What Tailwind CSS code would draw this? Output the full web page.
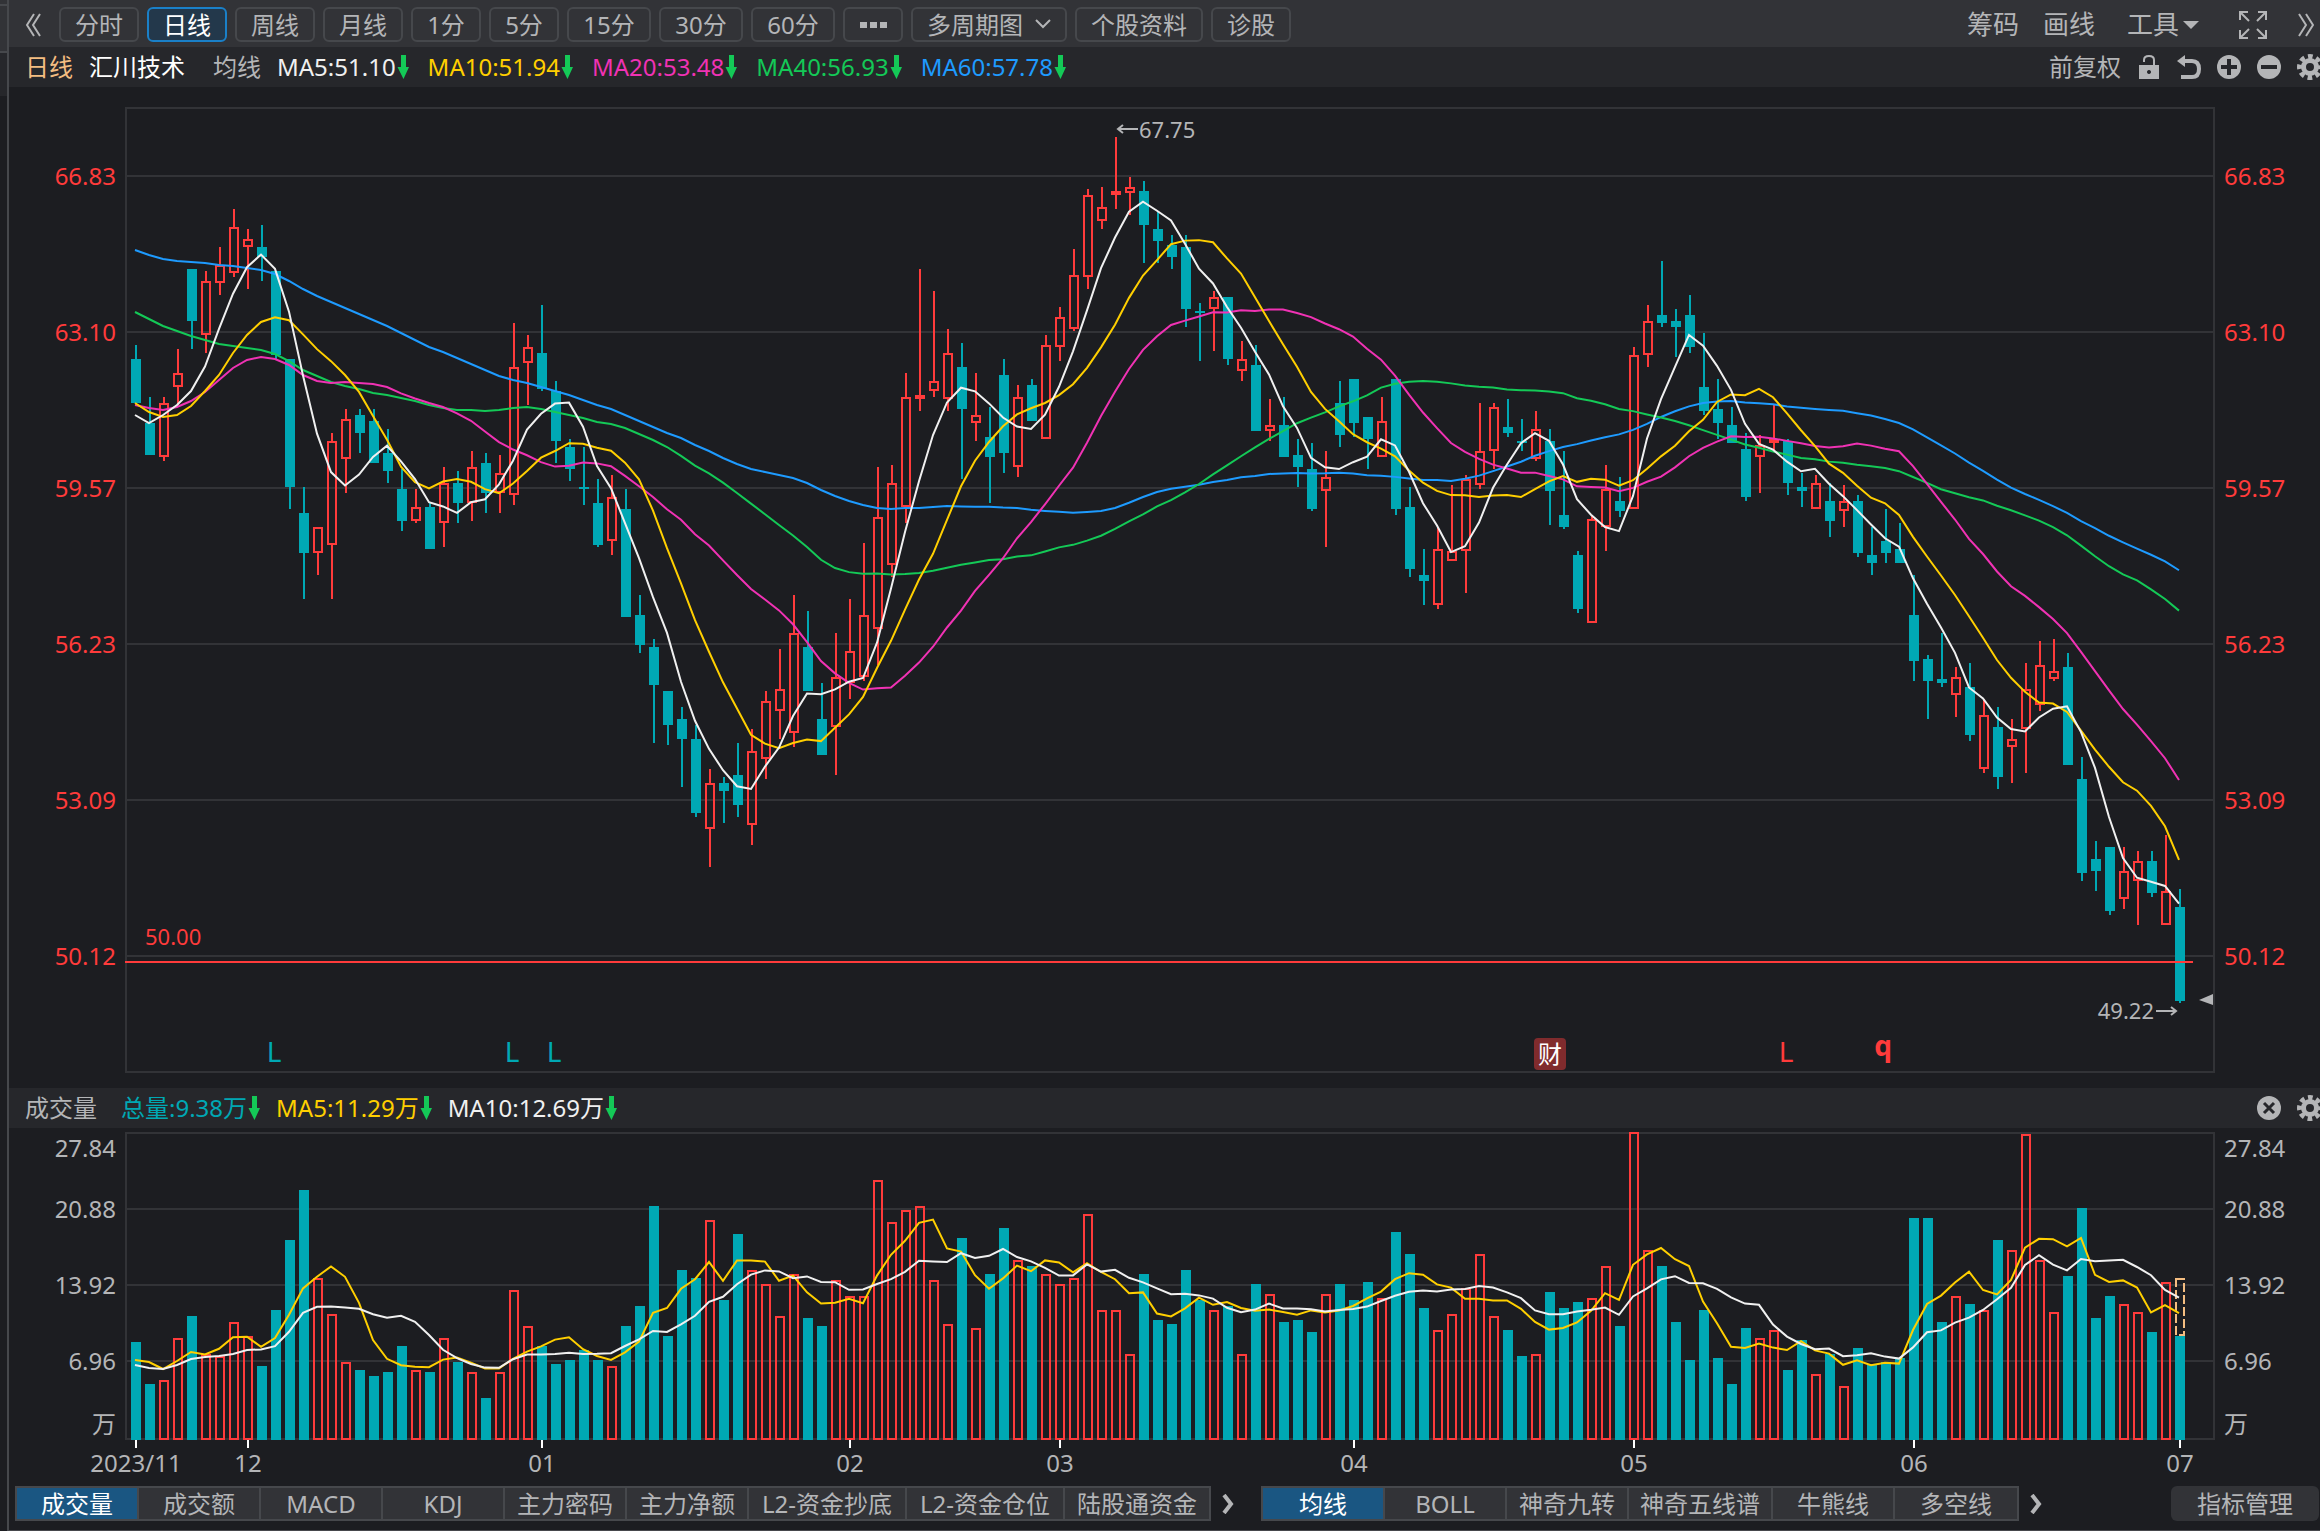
<!DOCTYPE html>
<html lang="zh-CN">

<head>
    <meta charset="UTF-8">
    <meta name="viewport" content="width=device-width,initial-scale=1.0">
    <script src="https://cdn.jsdelivr.net/npm/@tailwindcss/browser@4"></script>
    <title>汇川技术 - 日线</title>
</head>

<body class="bg-[#1c1d21] min-h-screen flex overflow-x-hidden text-2xl text-[#b4b5b7] font-['Noto_Sans','Noto_Sans_CJK_SC',sans-serif]">
    <!-- Shared icons -->
    <svg class="hidden">
        <symbol id="down" viewBox="0 0 12 24">
            <path d="M4 0h5v12h3L6.500 24 0.500 12H4z" fill="#14c957" />
        </symbol>
        <symbol id="gear" viewBox="0 0 26 26">
            <g fill="none" stroke="currentColor">
                <circle cx="13" cy="13" r="6.500" stroke-width="5" />
                <circle cx="13" cy="13" r="10.500" stroke-width="5" stroke-dasharray="4.600 3.647" stroke-dashoffset="2.300" />
            </g>
        </symbol>
    </svg>

    <!-- Edge of the side panel -->
    <div class="w-[9px] shrink-0 border-r-2 border-[#46484c]">
        <div class="h-1 bg-[#323337]"></div>
        <div class="h-[49px] bg-[#323337] border-y-2 border-[#46484c]"></div>
        <div class="h-[43px] bg-[#26272b]"></div>
    </div>

    <main class="flex-1 min-w-0 flex flex-col border-b border-[#46484c]">
        <!-- Period toolbar -->
        <header class="h-[47px] bg-[#323337] flex items-center pt-[2px] pl-4 pr-[6px] whitespace-nowrap">
            <button aria-label="收起" class="mr-[18px]">
                <svg class="w-4 h-6" viewBox="0 0 16 24" fill="none" stroke="currentColor" stroke-width="2"><path d="M9 1 2 12l7 11M15 1 8 12l7 11" /></svg>
            </button>
            <nav class="flex gap-2 leading-8">
                <button class="w-[80px] h-[35px] border-2 border-[#46484c] rounded-md">分时</button>
                <button class="w-[80px] h-[35px] border-2 border-[#1a80c8] rounded-md bg-[#23384b] text-white">日线</button>
                <button class="w-[80px] h-[35px] border-2 border-[#46484c] rounded-md">周线</button>
                <button class="w-[80px] h-[35px] border-2 border-[#46484c] rounded-md">月线</button>
                <button class="w-[70px] h-[35px] border-2 border-[#46484c] rounded-md">1分</button>
                <button class="w-[70px] h-[35px] border-2 border-[#46484c] rounded-md">5分</button>
                <button class="w-[84px] h-[35px] border-2 border-[#46484c] rounded-md">15分</button>
                <button class="w-[84px] h-[35px] border-2 border-[#46484c] rounded-md">30分</button>
                <button class="w-[84px] h-[35px] border-2 border-[#46484c] rounded-md">60分</button>
                <button aria-label="更多周期" class="w-[60px] h-[35px] border-2 border-[#46484c] rounded-md flex items-center justify-center gap-[3px]">
                    <span class="w-[7px] h-[6px] bg-[#b4b5b7]"></span>
                    <span class="w-[7px] h-[6px] bg-[#b4b5b7]"></span>
                    <span class="w-[7px] h-[6px] bg-[#b4b5b7]"></span>
                </button>
                <div class="relative">
                    <select aria-label="多周期图" class="appearance-none w-[156px] h-[35px] pl-[14px] border-2 border-[#46484c] rounded-md leading-[30px]">
                        <option>多周期图</option>
                    </select>
                    <svg class="absolute right-4 top-3 w-4 h-[10px] pointer-events-none" viewBox="0 0 16 10" fill="none" stroke="currentColor" stroke-width="2"><path d="m1 1 7 7 7-7" /></svg>
                </div>
                <button class="w-[128px] h-[35px] border-2 border-[#46484c] rounded-md">个股资料</button>
                <button class="w-[80px] h-[35px] border-2 border-[#46484c] rounded-md">诊股</button>
            </nav>
            <div class="ml-auto flex items-center text-[26px]">
                <button class="mr-6">筹码</button>
                <button class="mr-8">画线</button>
                <button class="flex items-center gap-1 mr-10">工具
                    <svg class="w-4 h-2" viewBox="0 0 16 8" fill="currentColor"><path d="M0 0h16L8 8z" /></svg>
                </button>
                <button aria-label="全屏" class="mr-[31px]">
                    <svg class="w-7 h-7" viewBox="0 0 28 28" fill="none" stroke="currentColor" stroke-width="2"><path d="M1 9V1h8M2 2l8 8M19 1h8v8M26 2l-8 8M1 19v8h8M2 26l8-8M27 19v8h-8M26 26l-8-8" /></svg>
                </button>
                <button aria-label="展开">
                    <svg class="w-4 h-6" viewBox="0 0 16 24" fill="none" stroke="currentColor" stroke-width="2"><path d="m1 1 7 11-7 11M8 1l7 11-7 11" /></svg>
                </button>
            </div>
        </header>

        <!-- Moving averages of the price -->
        <div class="h-10 bg-[#26272b] flex items-center pl-4 whitespace-nowrap overflow-hidden">
            <span class="text-[#f4bd81] mr-4">日线</span>
            <h1 class="text-white mr-7">汇川技术</h1>
            <span class="mr-4">均线</span>
            <div class="flex gap-[19px]">
                <span class="flex items-center text-[#f0f0f0]">MA5:51.10<svg class="w-3 h-6 ml-px"><use href="#down" /></svg></span>
                <span class="flex items-center text-[#ffcf00]">MA10:51.94<svg class="w-3 h-6 ml-px"><use href="#down" /></svg></span>
                <span class="flex items-center text-[#f032b4]">MA20:53.48<svg class="w-3 h-6 ml-px"><use href="#down" /></svg></span>
                <span class="flex items-center text-[#14c957]">MA40:56.93<svg class="w-3 h-6 ml-px"><use href="#down" /></svg></span>
                <span class="flex items-center text-[#1e9bff]">MA60:57.78<svg class="w-3 h-6 ml-px"><use href="#down" /></svg></span>
            </div>
            <div class="ml-auto flex items-center gap-4">
                <button class="mr-[2px]">前复权</button>
                <button aria-label="锁定" class="mr-[2px]">
                    <svg class="w-5 h-6" viewBox="0 0 20 24"><path d="M5 7V5q0-4 5-4t5 4v6" fill="none" stroke="currentColor" stroke-width="2" /><path d="M0 10h20v14H0zm10 5a2 2 0 1 0 .01 0z" fill="currentColor" fill-rule="evenodd" /></svg>
                </button>
                <button aria-label="撤销">
                    <svg class="w-6 h-6" viewBox="0 0 24 24"><path d="M4 6h11q7 0 7 8t-7 8H4" fill="none" stroke="currentColor" stroke-width="4" /><path d="M0 6l8-6v12z" fill="currentColor" /></svg>
                </button>
                <button aria-label="放大">
                    <svg class="w-6 h-6" viewBox="0 0 24 24"><circle cx="12" cy="12" r="12" fill="currentColor" /><path d="M4 12h16M12 4v16" stroke="#26272b" stroke-width="4" /></svg>
                </button>
                <button aria-label="缩小">
                    <svg class="w-6 h-6" viewBox="0 0 24 24"><circle cx="12" cy="12" r="12" fill="currentColor" /><path d="M4 12h16" stroke="#26272b" stroke-width="4" /></svg>
                </button>
                <button aria-label="均线设置" class="-mr-[3px]">
                    <svg class="w-[26px] h-[26px]"><use href="#gear" /></svg>
                </button>
            </div>
        </div>

        <!-- Price chart -->
        <section class="flex pt-5 pb-[15px]">
            <ul class="w-[116px] shrink-0 pr-[9px] -mt-[9px] text-right text-[#ff3b3b]">
                <li class="h-[156px] flex items-center justify-end">66.83</li>
                <li class="h-[156px] flex items-center justify-end">63.10</li>
                <li class="h-[156px] flex items-center justify-end">59.57</li>
                <li class="h-[156px] flex items-center justify-end">56.23</li>
                <li class="h-[156px] flex items-center justify-end">53.09</li>
                <li class="h-[156px] flex items-center justify-end">50.12</li>
            </ul>
            <svg id="price" class="flex-1 min-w-0 h-[966px]"></svg>
            <ul class="w-[105px] shrink-0 pl-[9px] -mt-[9px] text-[#ff3b3b]">
                <li class="h-[156px] flex items-center">66.83</li>
                <li class="h-[156px] flex items-center">63.10</li>
                <li class="h-[156px] flex items-center">59.57</li>
                <li class="h-[156px] flex items-center">56.23</li>
                <li class="h-[156px] flex items-center">53.09</li>
                <li class="h-[156px] flex items-center">50.12</li>
            </ul>
        </section>

        <!-- Volume header -->
        <div class="h-10 bg-[#26272b] flex items-center pl-4 whitespace-nowrap overflow-hidden">
            <h2 class="mr-6">成交量</h2>
            <div class="flex gap-4">
                <span class="flex items-center text-[#00a8b4]">总量:9.38万<svg class="w-3 h-6 ml-px"><use href="#down" /></svg></span>
                <span class="flex items-center text-[#ffcf00]">MA5:11.29万<svg class="w-3 h-6 ml-px"><use href="#down" /></svg></span>
                <span class="flex items-center text-[#f0f0f0]">MA10:12.69万<svg class="w-3 h-6 ml-px"><use href="#down" /></svg></span>
            </div>
            <div class="ml-auto flex items-center gap-4">
                <button aria-label="关闭">
                    <svg class="w-6 h-6" viewBox="0 0 24 24"><circle cx="12" cy="12" r="12" fill="currentColor" /><path d="m7 7 10 10M17 7 7 17" stroke="#26272b" stroke-width="3" /></svg>
                </button>
                <button aria-label="成交量设置" class="-mr-[3px]">
                    <svg class="w-[26px] h-[26px]"><use href="#gear" /></svg>
                </button>
            </div>
        </div>

        <!-- Volume chart -->
        <section class="flex pt-1">
            <ul class="w-[116px] shrink-0 pr-[9px] text-right">
                <li class="h-[39px] leading-8">27.84</li>
                <li class="h-[76px] flex items-center justify-end">20.88</li>
                <li class="h-[76px] flex items-center justify-end">13.92</li>
                <li class="h-[76px] flex items-center justify-end">6.96</li>
                <li class="h-[50px] flex items-center justify-end">万</li>
            </ul>
            <svg id="volume" class="flex-1 min-w-0 h-[348px] overflow-visible"></svg>
            <ul class="w-[105px] shrink-0 pl-[9px]">
                <li class="h-[39px] leading-8">27.84</li>
                <li class="h-[76px] flex items-center">20.88</li>
                <li class="h-[76px] flex items-center">13.92</li>
                <li class="h-[76px] flex items-center">6.96</li>
                <li class="h-[50px] flex items-center">万</li>
            </ul>
        </section>

        <!-- Indicator tabs -->
        <footer class="flex items-center mt-[6px] pl-[6px] whitespace-nowrap">
            <div class="flex h-[35px] border-2 border-[#46484c] divide-x-2 divide-[#46484c] bg-[#323337] leading-[30px]">
                <button class="w-[122px] bg-[#1a5682] text-white">成交量</button>
                <button class="w-[122px]">成交额</button>
                <button class="w-[122px]">MACD</button>
                <button class="w-[122px]">KDJ</button>
                <button class="w-[122px]">主力密码</button>
                <button class="w-[122px]">主力净额</button>
                <button class="w-[158px]">L2-资金抄底</button>
                <button class="w-[158px]">L2-资金仓位</button>
                <button class="w-[144px]">陆股通资金</button>
            </div>
            <button aria-label="更多副图指标" class="ml-[10px] mr-[26px]">
                <svg class="w-[14px] h-5" viewBox="0 0 14 20" fill="none" stroke="currentColor" stroke-width="4"><path d="m3 1 7 9-7 9" /></svg>
            </button>
            <div class="flex h-[35px] border-2 border-[#46484c] divide-x-2 divide-[#46484c] bg-[#323337] leading-[30px]">
                <button class="w-[122px] bg-[#1a5682] text-white">均线</button>
                <button class="w-[122px]">BOLL</button>
                <button class="w-[122px]">神奇九转</button>
                <button class="w-[144px]">神奇五线谱</button>
                <button class="w-[122px]">牛熊线</button>
                <button class="w-[122px]">多空线</button>
            </div>
            <button aria-label="更多主图指标" class="ml-[10px]">
                <svg class="w-[14px] h-5" viewBox="0 0 14 20" fill="none" stroke="currentColor" stroke-width="4"><path d="m3 1 7 9-7 9" /></svg>
            </button>
            <button class="ml-auto mr-px w-[148px] h-[35px] rounded-md bg-[#323337]">指标管理</button>
        </footer>
    </main>

    <script>
        const RED = '#ff3b3b';
        const TEAL = '#00a8b4';
        const GREY = '#b4b5b7';
        const GRID = '#323337';

        // One candle per day: up (1) or down (0), high, body top, body bottom, low
        const candles = [
            [0,345,359,403,403],[0,397,423,455,455],[1,397,403,457,461],[1,349,373,387,405],[0,269,269,321,349],
            [1,271,281,335,353],[1,247,265,283,295],[1,209,227,273,277],[1,229,239,247,289],[0,225,247,257,281],
            [0,271,271,355,360],[0,359,359,487,509],[0,487,513,553,599],[1,527,527,553,575],[1,433,441,545,599],
            [1,409,419,459,493],[0,409,415,433,453],[0,409,421,463,463],[0,429,453,471,483],[0,469,489,521,531],
            [1,489,507,521,523],[0,502,507,549,549],[1,467,483,523,547],[0,471,483,503,523],[1,451,467,503,521],
            [0,453,463,493,513],[1,455,473,493,513],[1,323,367,495,505],[1,335,347,363,405],[0,305,353,389,391],
            [0,381,391,441,463],[0,439,447,469,481],[0,447,487,489,505],[0,479,503,545,547],[1,475,497,541,555],
            [0,489,509,617,617],[0,595,615,645,653],[0,639,647,685,743],[0,691,691,725,745],[0,707,719,739,787],
            [0,725,739,813,817],[1,769,783,829,867],[0,777,783,791,823],[0,743,775,805,817],[1,729,751,825,845],
            [1,691,701,759,779],[1,649,689,711,739],[1,595,633,733,747],[0,611,647,691,691],[0,683,719,755,755],
            [1,633,677,727,775],[1,599,651,683,699],[1,543,615,677,681],[1,467,517,629,665],[1,465,483,565,577],
            [1,373,397,507,523],[1,269,395,399,411],[1,291,381,391,397],[1,329,353,399,411],[0,343,367,409,479],
            [1,373,415,423,441],[0,407,437,457,503],[0,359,375,453,473],[1,385,397,467,477],[0,379,385,421,421],
            [1,335,345,439,439],[1,307,317,347,361],[1,249,275,329,331],[1,189,195,277,289],[1,187,207,221,229],
            [1,137,191,195,209],[1,177,187,193,215],[0,181,191,225,263],[0,211,229,241,263],[0,235,245,257,269],
            [0,235,247,309,327],[0,303,311,313,361],[1,291,297,309,351],[0,297,297,359,365],[1,341,359,371,381],
            [0,345,365,431,431],[1,399,425,431,441],[0,397,425,457,457],[0,439,455,467,487],[0,443,469,509,511],
            [1,451,477,491,547],[0,381,403,435,447],[0,379,379,423,437],[0,417,417,439,469],[1,397,421,457,457],
            [0,379,379,509,515],[0,487,507,569,577],[0,549,575,581,605],[1,527,549,605,609],[1,485,551,561,561],
            [1,475,479,551,593],[1,403,451,485,489],[1,403,407,451,469],[0,399,427,433,437],[0,419,441,443,451],
            [1,411,429,459,461],[0,429,441,491,525],[0,451,515,527,529],[0,551,555,609,613],[1,515,519,623,623],
            [1,465,489,527,551],[0,477,501,511,517],[1,347,355,509,509],[1,305,321,355,367],[0,261,315,323,327],
            [0,309,321,327,357],[0,295,315,347,353],[0,333,387,411,415],[0,379,409,423,439],[0,407,425,443,443],
            [0,433,449,497,501],[1,435,445,457,493],[1,404,439,443,450],[0,439,441,483,495],[0,473,487,491,507],
            [1,475,483,509,509],[0,483,501,521,537],[1,485,501,511,527],[0,495,501,553,557],[0,527,555,563,575],
            [0,509,541,553,563],[0,523,549,563,563],[0,575,615,661,681],[0,655,659,681,719],[0,633,679,683,687],
            [1,667,677,695,717],[0,663,687,735,741],[1,699,715,769,773],[0,707,727,777,789],[1,719,739,747,783],
            [1,663,689,729,773],[1,641,665,705,711],[1,639,671,679,681],[0,653,667,765,765],[0,757,779,873,881],
            [0,841,859,871,891],[0,847,847,911,915],[1,847,871,899,909],[1,851,861,881,925],[0,851,861,893,897],
            [1,835,891,925,925],[0,889,907,1001,1003]
        ];

        // Top edge of each volume bar
        const volumes = [
            1342,1384,1380,1338,1316,1354,1356,1322,1336,1366,1310,1240,1190,1278,1314,1362,1370,1376,1372,1346,
            1370,1372,1338,1362,1372,1398,1372,1290,1326,1346,1364,1360,1350,1360,1366,1326,1306,1206,1336,1270,
            1278,1220,1300,1234,1270,1284,1316,1274,1318,1326,1280,1296,1296,1180,1222,1210,1206,1280,1324,1238,
            1328,1274,1228,1260,1266,1274,1284,1278,1214,1310,1310,1354,1274,1320,1324,1270,1300,1310,1306,1354,
            1284,1294,1322,1320,1332,1294,1284,1300,1282,1298,1232,1254,1308,1330,1314,1288,1254,1316,1330,1356,
            1354,1292,1308,1302,1298,1266,1326,1132,1250,1266,1322,1360,1310,1358,1384,1328,1338,1330,1370,1340,
            1374,1354,1386,1348,1364,1362,1358,1218,1218,1322,1296,1304,1310,1240,1250,1134,1260,1312,1276,1208,
            1318,1296,1304,1312,1332,1282,1336
        ];

        // Averages before the first full window, they come from days left of the chart
        const priceAverages = [
            { days: 60, color: '#1e9bff', start: [250,255,259,261,262,263,265,266,268,270,274,281,289,296,302,308,314,320,326,333,340,347,352,358,364,370,376,380,383,387,391,395,400,405,409,415,421,427,433,438,445,451,458,464,469,472,475,478,483,490,496,501,505,508,509,508,508,507,506] },
            { days: 40, color: '#14c957', start: [312,319,326,331,336,340,344,346,348,350,354,361,370,376,382,386,389,393,395,398,401,405,408,410,410,411,410,408,407,409,412,415,418,422,424,428,434,440,447] },
            { days: 20, color: '#f032b4', start: [405,408,410,407,401,392,380,368,360,357,359,365,375,381,383,382,383,384,387] },
            { days: 10, color: '#ffcf00', start: [403,412,417,415,406,391,375,353,335] },
            { days: 5, color: '#f0f0f0', start: [415,423,415,405] }
        ];
        const volumeAverages = [
            { days: 5, color: '#ffcf00', start: [1360,1362,1369,1361] },
            { days: 10, color: '#f0f0f0', start: [1365,1368,1369,1365,1359,1357,1356,1354,1350] }
        ];

        const months = [[0, '2023/11'], [8, '12'], [29, '01'], [51, '02'], [66, '03'], [87, '04'], [107, '05'], [127, '06'], [146, '07']];

        // The price axis is logarithmic
        const SCALE = Math.log(50.12 / 66.83) / 780;
        const toPrice = y => 66.83 * Math.exp(SCALE * (y - 176));
        const toY = p => 176 + Math.log(p / 66.83) / SCALE;

        const line = (x1, y1, x2, y2, color) =>
            `<line x1="${x1}" y1="${y1}" x2="${x2}" y2="${y2}" stroke="${color}" stroke-width="2"/>`;
        const text = (x, y, size, color, str, extra = '') =>
            `<text x="${x}" y="${y}" font-size="${size}" fill="${color}" ${extra}>${str}</text>`;

        // Hollow bar for a rise, filled bar for a fall
        function bar(x, top, bottom, up) {
            return up
                ? `<rect x="${x - 4}" y="${top + 1}" width="8" height="${bottom - top - 2}" fill="none" stroke="${RED}" stroke-width="2"/>`
                : `<rect x="${x - 5}" y="${top}" width="10" height="${bottom - top}" fill="${TEAL}"/>`;
        }

        function average(avg, values, x) {
            const pts = values.map((v, i) => {
                if (i < avg.start.length) return `${x(i)},${avg.start[i]}`;
                const win = values.slice(i - avg.days + 1, i + 1);
                const mean = win.reduce((a, b) => a + b, 0) / avg.days;
                return `${x(i)},${avg.log ? toY(mean) : mean}`;
            });
            return `<polyline points="${pts.join(' ')}" fill="none" stroke="${avg.color}" stroke-width="2"/>`;
        }

        function drawPrice(svg, w) {
            const step = (w - 46) / (candles.length - 1);
            const x = i => 11 + step * i;
            svg.setAttribute('viewBox', `0 107 ${w} 966`);

            let out = `<rect x="1" y="108" width="${w - 2}" height="964" fill="none" stroke="${GRID}" stroke-width="2"/>`;
            for (let y = 176; y <= 956; y += 156) out += line(2, y, w - 2, y, GRID);

            candles.forEach(([up, high, top, bottom, low], i) => {
                const color = up ? RED : TEAL;
                if (high < top) out += line(x(i), high, x(i), top, color);
                if (low > bottom) out += line(x(i), bottom, x(i), low, color);
                out += bar(x(i), top, bottom, up);
            });

            const closes = candles.map(c => toPrice(c[0] ? c[2] + 1 : c[3]));
            priceAverages.forEach(a => { out += average({ ...a, log: true }, closes, i => x(i) - 1); });

            // Alert line
            out += line(0, 962, x(146) + 13, 962, RED) + text(20, 945, 22, RED, '50.00');

            // Highest and lowest price
            const hi = x(70);
            out += `<path d="M${hi + 22} 129h-20m5-4-5 4 5 4" fill="none" stroke="${GREY}" stroke-width="2"/>`;
            out += text(hi + 23, 138, 22, GREY, '67.75');
            const lo = x(146);
            out += `<path d="M${lo - 24} 1011h20m-5-4 5 4-5 4" fill="none" stroke="${GREY}" stroke-width="2"/>`;
            out += text(lo - 26, 1019, 22, GREY, '49.22', 'text-anchor="end"');
            out += `<path d="M${w - 2} 994v11l-14-5z" fill="${GREY}"/>`;

            // Event marks
            [10, 27, 30].forEach(i => { out += text(x(i) - 2, 1062, 28, TEAL, 'L', 'text-anchor="middle"'); });
            out += text(x(118) - 2, 1062, 28, RED, 'L', 'text-anchor="middle"');
            out += text(x(125) - 3, 1056, 28, RED, 'q', 'text-anchor="middle" font-weight="700"');
            out += `<rect x="${x(101) - 16}" y="1038" width="32" height="32" rx="4" fill="#802b2d"/>`;
            out += text(x(101), 1063, 24, '#ffffff', '财', 'text-anchor="middle"');
            svg.innerHTML = out;
        }

        function drawVolume(svg, w) {
            const step = (w - 46) / (volumes.length - 1);
            const x = i => 11 + step * i;
            svg.setAttribute('viewBox', `0 1132 ${w} 348`);

            let out = `<rect x="1" y="1133" width="${w - 2}" height="306" fill="none" stroke="${GRID}" stroke-width="2"/>`;
            for (let y = 1209; y <= 1361; y += 76) out += line(2, y, w - 2, y, GRID);
            volumes.forEach((top, i) => { out += bar(x(i), top, 1440, candles[i][0]); });

            // Expected volume of the running day
            out += `<rect x="${x(146) - 4}" y="1279" width="8" height="56" fill="none" stroke="#f4bd81" stroke-width="2" stroke-dasharray="9 3"/>`;
            volumeAverages.forEach(a => { out += average(a, volumes, i => x(i) - 1); });

            months.forEach(([i, name]) => {
                out += line(x(i), 1440, x(i), 1448, '#ffffff');
                out += text(x(i), 1472, 24, GREY, name, 'text-anchor="middle"');
            });
            svg.innerHTML = out;
        }

        // Draw each chart at its own width, again whenever that changes
        function watch(id, draw) {
            const svg = document.getElementById(id);
            new ResizeObserver(() => draw(svg, Math.round(svg.getBoundingClientRect().width))).observe(svg);
        }

        watch('price', drawPrice);
        watch('volume', drawVolume);
    </script>
</body>

</html>
